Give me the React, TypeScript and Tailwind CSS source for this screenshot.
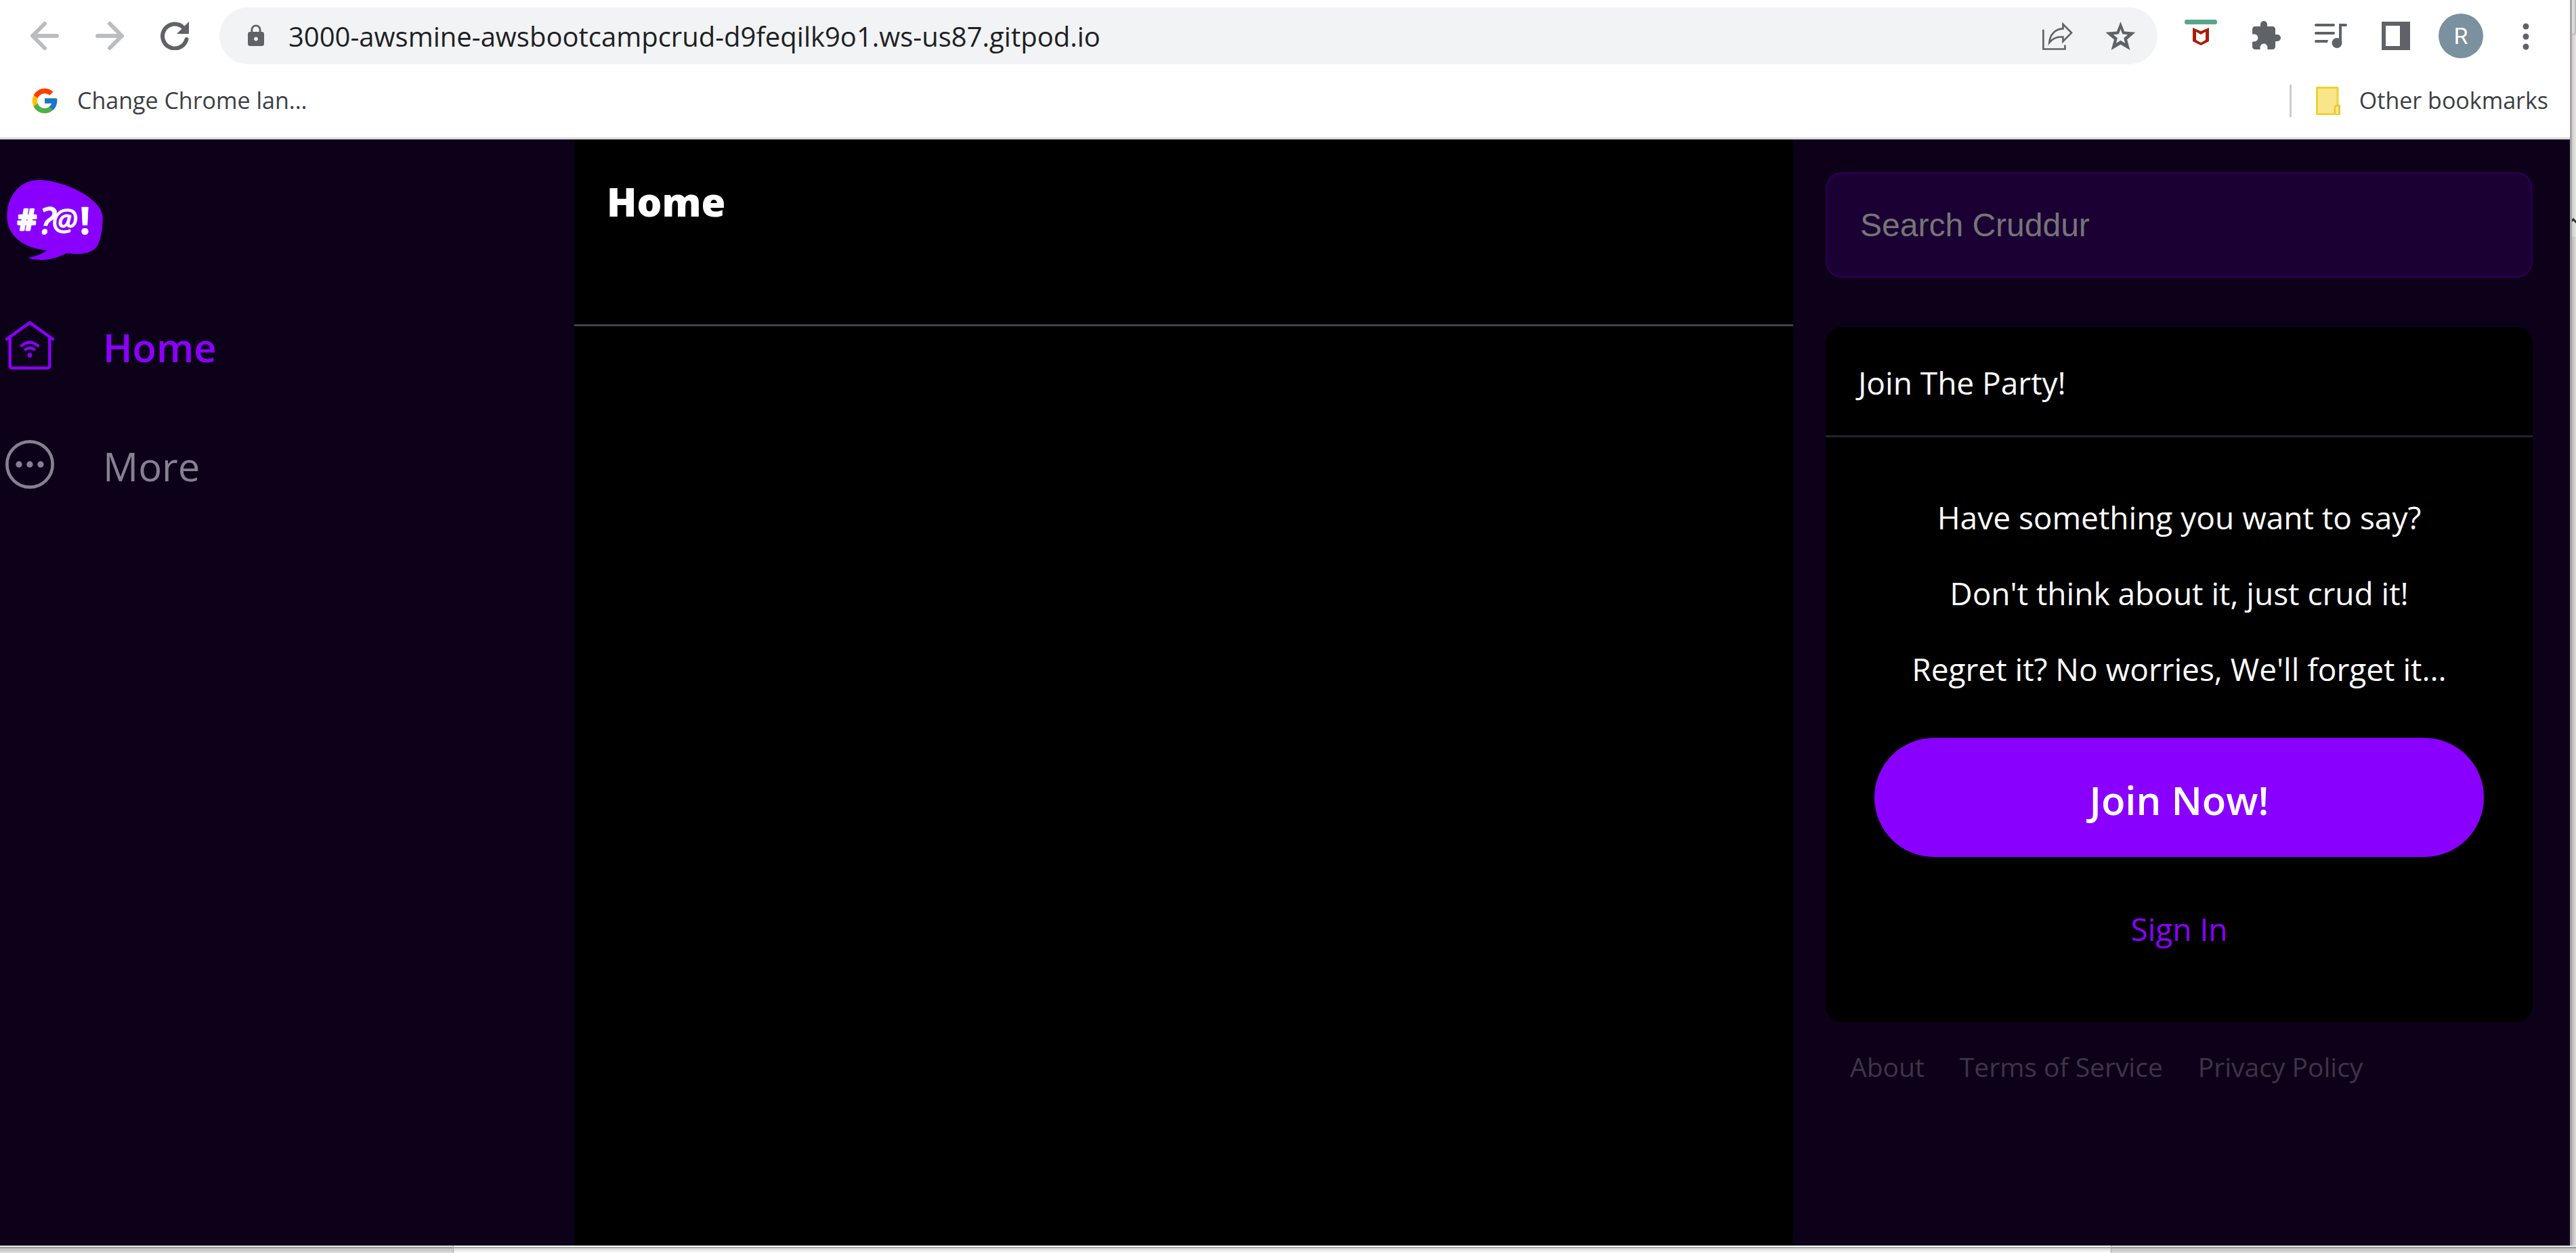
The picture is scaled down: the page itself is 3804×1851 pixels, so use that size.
import React from "react";
import { MdExtension, MdLock } from "react-icons/md";
import { FcGoogle } from "react-icons/fc";

function ArrowIcon({ className = "" }: { className?: string }) {
  return (
    <svg viewBox="0 0 42 42" className={`size-[42px] ${className}`} fill="none" stroke="#babcbe" strokeWidth="6" strokeLinecap="round" strokeLinejoin="round" aria-hidden="true">
      <path d="M21 3 3 21l18 18M4 21h35" />
    </svg>
  );
}

function ReloadIcon() {
  return (
    <svg viewBox="0 0 42 42" className="size-[42px]" aria-hidden="true">
      <path d="M34 9A18 18 0 1 0 38.5 26" fill="none" stroke="#5f6368" strokeWidth="6" strokeLinecap="round" />
      <path d="M42 0v18H24z" fill="#5f6368" />
    </svg>
  );
}

function ShareIcon() {
  return (
    <svg viewBox="36 66 136 126" className="h-[42px] w-[45px]" fill="none" stroke="#5f6368" strokeWidth="8" aria-hidden="true">
      <path d="M40 101v87h97v-18" />
      <path d="m128 77 38 38-38 39v-20c-27-3-45 5-61 25 3-37 26-60 61-62z" />
    </svg>
  );
}

function StarIcon() {
  return (
    <svg viewBox="320 63 134 127" className="h-[42px] w-[45px]" fill="#5f6368" fillRule="evenodd" aria-hidden="true">
      <path d="m387 63 17 44 49 4-37 32 13 47-42-25-42 25 13-47-38-32 50-4zm0 33-8 22-24 3 18 15-6 23 20-12 20 12-6-23 18-15-24-3z" />
    </svg>
  );
}

function ShieldIcon() {
  return (
    <svg viewBox="0 0 48 48" className="size-12" aria-hidden="true">
      <rect width="48" height="7" rx="3" fill="#5aa68b" />
      <path fill="#ab1c05" fillRule="evenodd" d="m12 12 12 5 12-5v20l-12 6-12-6zm5 6v12l7 4 7-4V18l-7 4z" />
    </svg>
  );
}

function QueueIcon() {
  return (
    <svg viewBox="0 0 48 48" className="size-12" fill="#5f6368" aria-hidden="true">
      <rect y="6" width="30" height="4" rx="2" />
      <rect y="18" width="30" height="4" rx="2" />
      <path d="M2 30h18l-1 4H2a2 2 0 0 1 0-4z" />
      <circle cx="33" cy="34.5" r="7.5" />
      <path d="M36 35V6h10a2 2 0 0 1 0 4h-6v25z" />
    </svg>
  );
}

function SidePanelIcon() {
  return (
    <svg viewBox="0 0 48 48" className="size-12" aria-hidden="true">
      <path fill="#5f6368" fillRule="evenodd" d="M3 3h42v42H3zm6 6v30h21V9z" />
    </svg>
  );
}

function DotsIcon() {
  return (
    <svg viewBox="0 0 48 48" className="size-12" fill="#5f6368" aria-hidden="true">
      <circle cx="24" cy="10" r="4.5" />
      <circle cx="24" cy="25" r="4.5" />
      <circle cx="24" cy="40" r="4.5" />
    </svg>
  );
}

function FolderIcon() {
  return (
    <svg viewBox="0 0 36 42" className="h-[42px] w-[36px]" aria-hidden="true">
      <path d="M1.5 1.5H32v26.5h2.5v12.5h-33z" fill="#fae68a" stroke="#ecd235" strokeWidth="3" strokeLinejoin="round" />
      <path d="M28 40V31a3 3 0 0 1 3-3h1.5a2 2 0 0 1 2 2v10" fill="#fae68a" stroke="#e3c92c" strokeWidth="2.5" />
    </svg>
  );
}

function Logo() {
  return (
    <svg viewBox="30 110 426 356" className="h-[118px] w-[142px]" role="img" aria-label="Cruddur">
      <path
        fill="#8a00ff"
        d="M180 110c62 2 150 32 205 70 46 33 68 62 71 92 1 50-8 100-22 128-14 26-42 38-84 39-20 0-38-1-56-3-34 18-70 29-106 30-26 0-48-3-65-10 34-5 62-16 86-33-57-4-108-22-141-57-27-28-38-58-38-97 0-48 14-84 45-119 28-29 62-41 105-40z"
      />
      <g fill="#fff" stroke="#fff" strokeLinejoin="round" className="font-['Open_Sans'] font-bold">
        <text x="76" y="334" fontSize="132" strokeWidth="8">#</text>
        <text x="172" y="351" fontSize="168" strokeWidth="1" className="font-semibold italic">?</text>
        <text x="230" y="334" fontSize="134" strokeWidth="5" className="font-medium italic">@</text>
        <text x="353" y="351" fontSize="168" strokeWidth="2">!</text>
      </g>
    </svg>
  );
}

function HomeIcon() {
  return (
    <svg viewBox="24 732 216 216" className="size-[72px]" fill="none" stroke="#8a00ff" strokeWidth="13" strokeLinecap="round" aria-hidden="true">
      <path d="m30 813 102-73 102 73" />
      <path d="M44 806v124q0 11 11 11h154q11 0 11-11V806" />
      <path d="M96 842q36-30 72 0M113 859q19-14 38 0" />
      <circle cx="132" cy="884" r="10" fill="#8a00ff" stroke="none" />
    </svg>
  );
}

function MoreIcon() {
  return (
    <svg viewBox="0 0 216 216" className="size-[72px]" fill="#877f92" aria-hidden="true">
      <circle cx="108" cy="108" r="101" fill="none" stroke="#877f92" strokeWidth="14" />
      <circle cx="60" cy="108" r="14" />
      <circle cx="108" cy="108" r="14" />
      <circle cx="156" cy="108" r="14" />
    </svg>
  );
}

function Toolbar() {
  return (
    <div className="flex h-[106px] items-center pl-[45px] pr-[41px]">
      <div className="mr-[45px] flex gap-[54px]">
        <button aria-label="Back"><ArrowIcon /></button>
        <button aria-label="Forward"><ArrowIcon className="rotate-180" /></button>
        <button aria-label="Reload"><ReloadIcon /></button>
      </div>
      <div className="mr-10 flex h-[84px] flex-1 items-center rounded-full bg-[#f1f3f4] pl-9 pr-8">
        <MdLock className="mr-[30px] size-9 text-[#5f6368]" aria-hidden="true" />
        <input
          aria-label="Address"
          defaultValue="3000-awsmine-awsbootcampcrud-d9feqilk9o1.ws-us87.gitpod.io"
          className="h-full min-w-0 flex-1 bg-transparent text-[40px] text-[#202124] outline-none"
        />
        <div className="flex gap-12">
          <button aria-label="Share"><ShareIcon /></button>
          <button aria-label="Bookmark this tab"><StarIcon /></button>
        </div>
      </div>
      <div className="flex items-center gap-12">
        <button aria-label="WebAdvisor"><ShieldIcon /></button>
        <button aria-label="Extensions"><MdExtension className="size-12 text-[#5f6368]" /></button>
        <button aria-label="Media"><QueueIcon /></button>
        <button aria-label="Side panel"><SidePanelIcon /></button>
        <button className="-mx-[9px] flex size-[66px] items-center justify-center rounded-full bg-[#7b919f] font-[Roboto] text-[34px] text-white">R</button>
        <button aria-label="Menu"><DotsIcon /></button>
      </div>
    </div>
  );
}

function BookmarksBar() {
  return (
    <div className="flex h-[100px] items-center border-b-[3px] border-[#dadadc] pb-3 pl-11 pr-8 text-[34px] text-[#3c4043]">
      <a href="#" className="flex items-center gap-[26px]">
        <FcGoogle className="size-11" aria-hidden="true" />
        Change Chrome lan...
      </a>
      <div className="ml-auto flex items-center">
        <div className="mr-9 h-12 w-[3px] bg-[#cdcdcd]" />
        <button className="flex items-center gap-7">
          <FolderIcon />
          Other bookmarks
        </button>
      </div>
    </div>
  );
}

function Sidebar() {
  return (
    <nav className="bg-[#0d0119] pl-2 pt-[60px]">
      <a href="#" className="mb-[38px] block w-fit pl-[2px]"><Logo /></a>
      <a href="#" className="flex h-44 items-center gap-[72px] text-[58px] font-semibold text-[#8a00ff]">
        <HomeIcon />
        <span className="pt-1">Home</span>
      </a>
      <a href="#" className="flex h-44 items-center gap-[72px] text-[58px] text-[#877f92]">
        <MoreIcon />
        <span className="pt-1">More</span>
      </a>
    </nav>
  );
}

function RightColumn() {
  return (
    <aside className="bg-[#0d0119] pl-12 pr-[55px] pt-12">
      <input
        type="text"
        aria-label="Search Cruddur"
        placeholder="Search Cruddur"
        className="mb-[72px] block h-[157px] w-full rounded-3xl border-[3px] border-[#270049] bg-[#1b0034] px-12 font-['Liberation_Sans',sans-serif] text-[48px] text-white outline-none placeholder:text-[#757575]"
      />
      <section className="rounded-3xl bg-black text-[46px] leading-[64px] text-white">
        <h2 className="border-b-[3px] border-[#22232e] px-12 pb-[46px] pt-[50px]">Join The Party!</h2>
        <div className="flex flex-col px-[72px] pb-[106px] pt-[86px] text-center">
          <div className="flex flex-col gap-12">
            <p>Have something you want to say?</p>
            <p>Don't think about it, just crud it!</p>
            <p>Regret it? No worries, We'll forget it...</p>
          </div>
          <a href="#" className="mt-[70px] flex h-44 items-center justify-center rounded-full bg-[#8a00ff] pt-2 text-[58px] font-semibold">
            Join Now!
          </a>
          <a href="#" className="mt-[74px] self-center leading-[64px] text-[#8a00ff]">Sign In</a>
        </div>
      </section>
      <footer className="mt-[38px] flex gap-[52px] px-9 text-[39px] leading-[56px] text-[#3d3447]">
        <a href="#">About</a>
        <a href="#">Terms of Service</a>
        <a href="#">Privacy Policy</a>
      </footer>
    </aside>
  );
}

function WindowEdge() {
  return (
    <div className="flex w-[9px] shrink-0 flex-col overflow-hidden border-l-[3px] border-[#a6a3a5] bg-[#d2cfcd]">
      <div className="h-[52px] rounded-br-md border-b-2 border-r-2 border-[#bdbbbb] bg-[#dddcdc]" />
      <div className="flex h-[298px] items-end bg-linear-to-r from-[#cfcdcc] to-[#e8e6e5] pb-5">
        <svg viewBox="0 0 6 8" className="h-2 w-[6px]" fill="none" stroke="#333" strokeWidth="3" aria-hidden="true">
          <path d="m-4 8 6-6 6 6" />
        </svg>
      </div>
      <div className="flex-1 bg-linear-to-r from-[#bdbab9] to-[#dedbd9]" />
    </div>
  );
}

function BottomEdge() {
  return (
    <div className="grid h-[11px] shrink-0 grid-cols-[670fr_2447fr_687fr]">
      <div className="flex flex-col border-r border-[#a8a8a8]">
        <div className="h-[2px] bg-[#e8e8e8]" />
        <div className="flex-1 border-t-2 border-[#9a9a9a] bg-linear-to-b from-[#bdbdbd] to-[#dfdfdf]" />
      </div>
      <div className="flex flex-col">
        <div className="h-[2px] bg-white" />
        <div className="flex-1 border-t-2 border-[#a8a8a8] bg-linear-to-b from-[#d8d8d8] to-white" />
      </div>
      <div className="flex flex-col border-l border-[#a8a8a8]">
        <div className="h-[2px] bg-[#e8e8e8]" />
        <div className="flex-1 border-t-2 border-[#9a9a9a] bg-linear-to-b from-[#bdbdbd] to-[#dfdfdf]" />
      </div>
    </div>
  );
}

export default function App() {
  return (
    <div className="flex min-h-screen flex-col bg-white font-['Open_Sans',sans-serif]">
      <div className="flex flex-1">
        <div className="flex min-w-0 flex-1 flex-col">
          <header>
            <Toolbar />
            <BookmarksBar />
          </header>
          <div className="grid flex-1 grid-cols-[848fr_1800fr_1147fr]">
            <Sidebar />
            <main className="bg-black">
              <h1 className="border-b-[3px] border-[#3f404d] px-12 pb-[141px] pt-[52px] text-[58px] leading-[80px] font-black text-white">Home</h1>
            </main>
            <RightColumn />
          </div>
        </div>
        <WindowEdge />
      </div>
      <BottomEdge />
    </div>
  );
}
